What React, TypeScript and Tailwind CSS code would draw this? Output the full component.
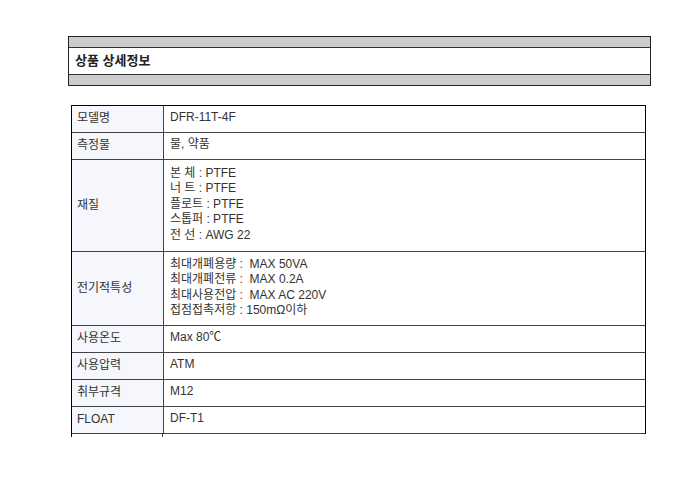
import React from "react";

const font = { fontFamily: '"Liberation Sans", "Noto Sans CJK KR", sans-serif' };

type Row = { label: string; lines: string[]; h: string };

const rows: Row[] = [
  { label: "모델명", lines: ["DFR-11T-4F"], h: "h-[27px]" },
  { label: "측정물", lines: ["물, 약품"], h: "h-[27px]" },
  {
    label: "재질",
    lines: ["본 체 : PTFE", "너 트 : PTFE", "플로트 : PTFE", "스톱퍼 : PTFE", "전 선 : AWG 22"],
    h: "h-[92px]",
  },
  {
    label: "전기적특성",
    lines: ["최대개폐용량 :  MAX 50VA", "최대개폐전류 :  MAX 0.2A", "최대사용전압 :  MAX AC 220V", "접점접촉저항 : 150mΩ이하"],
    h: "h-[74px]",
  },
  { label: "사용온도", lines: ["Max 80℃"], h: "h-[27px]" },
  { label: "사용압력", lines: ["ATM"], h: "h-[27px]" },
  { label: "취부규격", lines: ["M12"], h: "h-[27px]" },
  { label: "FLOAT", lines: ["DF-T1"], h: "h-[27px]" },
];

export default function App() {
  return (
    <div className="w-[700px] h-[477px] bg-white text-[12px] text-[#333]" style={font}>
      <div className="pt-[36px] pl-[68px]">
        <div className="w-[583px] border border-[#222]">
          <div className="h-[10px] bg-[#cccccc]" />
          <div className="h-[27px] border-t border-[#333] flex items-center pl-[6px] text-[13px] font-bold text-[#222]">
            상품 상세정보
          </div>
          <div className="h-[11px] border-t border-[#333] bg-[#cccccc]" />
        </div>
      </div>
      <div className="pt-[19px] pl-[71px]">
        <div className="w-[575px] border-l border-r border-t border-black">
          {rows.map((r) => (
            <div key={r.label} className={`flex border-b border-[#444] ${r.h}`}>
              <div className="w-[92px] shrink-0 bg-[#f6f6fd] border-r border-[#444] flex items-center pl-[5px] pb-[2px]">
                {r.label}
              </div>
              <div className="flex-1 flex flex-col justify-center pl-[6px] pb-[2px] leading-[15.5px] whitespace-pre">
                {r.lines.map((l) => (
                  <div key={l}>{l}</div>
                ))}
              </div>
            </div>
          ))}
        </div>
        <div className="w-[92px] h-[3px] border-l border-r border-l-black border-r-[#444]" />
      </div>
    </div>
  );
}
